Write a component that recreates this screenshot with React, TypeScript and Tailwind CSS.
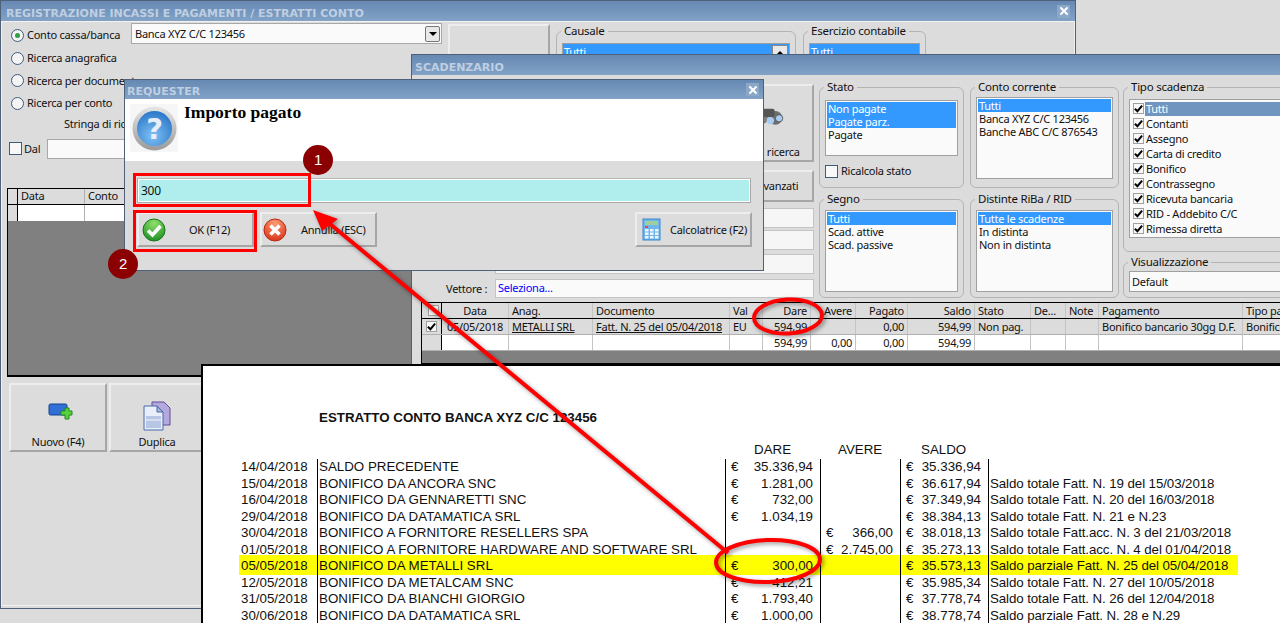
import { X } from "lucide-react";
import type { ReactNode } from "react";

const titleBar =
  "flex items-center justify-between bg-gradient-to-b from-[#6689b3] to-[#82a2c6] font-['DejaVu_Sans'] text-[11px] font-bold tracking-normal text-[#bfcfe2]";

function CloseBox({ className }: { className: string }) {
  return (
    <span className={`flex h-[13px] w-[13px] items-center justify-center bg-[#8ba8c9] ${className}`}>
      <X size={12} strokeWidth={4} className="text-white" />
    </span>
  );
}

function Radio({ label, checked }: { label: string; checked?: boolean }) {
  return (
    <div className="flex h-[22.7px] items-center gap-[3px] whitespace-nowrap">
      <span className="flex h-[13px] w-[13px] shrink-0 items-center justify-center rounded-full border border-[#3f5c7c] bg-[#f4f4f4]">
        {checked && <span className="h-[5px] w-[5px] rounded-full bg-[#2f9e44]" />}
      </span>
      {label}
    </div>
  );
}

function CheckBox({ checked, small }: { checked?: boolean; small?: boolean }) {
  return (
    <span
      className={`flex shrink-0 items-center justify-center border bg-[#f8f8f8] ${
        small ? "h-[11px] w-[11px] border-[#a0a0a0]" : "h-[13px] w-[13px] border-[#3f5c7c]"
      }`}
    >
      {checked && (
        <svg viewBox="0 0 10 10" className="h-[9px] w-[9px]">
          <path d="M1 5.2 L3.8 8 L9 1.8" fill="none" stroke="#000" strokeWidth="2.2" />
        </svg>
      )}
    </span>
  );
}

function Bevel({ className, children }: { className: string; children?: ReactNode }) {
  return (
    <div
      className={`shrink-0 border-2 border-t-[#ededed] border-l-[#ededed] border-r-[#a6a6a6] border-b-[#a6a6a6] bg-[#dcdcdc] ${className}`}
    >
      {children}
    </div>
  );
}

function Group({ label, className, children }: { label: string; className: string; children?: ReactNode }) {
  return (
    <fieldset className={`shrink-0 rounded-[6px] border border-[#b4b4b4] px-[5px] ${className}`}>
      <legend className="-ml-[1px] px-[3px] text-[11.5px] leading-[14px]">{label}</legend>
      {children}
    </fieldset>
  );
}

function ListBox({
  items,
  selected,
  className,
}: {
  items: string[];
  selected: number;
  className: string;
}) {
  return (
    <div className={`border border-[#a0a0a0] bg-[#fafafa] p-[1px] leading-[13px] ${className}`}>
      {items.map((item, i) => (
        <div key={item} className={`h-[13px] pl-[1px] ${i < selected ? "bg-[#3399ff] text-white" : ""}`}>
          {item}
        </div>
      ))}
    </div>
  );
}

function Binoculars({ className }: { className: string }) {
  return (
    <svg viewBox="0 0 34 24" className={className}>
      <circle cx="9" cy="14" r="7" fill="#7f7f7f" />
      <circle cx="24" cy="14" r="7.5" fill="#6d6d6d" />
      <rect x="10" y="4" width="13" height="9" rx="2" fill="#555" />
      <circle cx="18.5" cy="17" r="4" fill="#a9cdf2" />
      <circle cx="28" cy="14.5" r="4" fill="#a9cdf2" stroke="#555" />
    </svg>
  );
}

const tipoScadenza = [
  "Tutti",
  "Contanti",
  "Assegno",
  "Carta di credito",
  "Bonifico",
  "Contrassegno",
  "Ricevuta bancaria",
  "RID - Addebito C/C",
  "Rimessa diretta",
];

const gridCols =
  "grid grid-cols-[20px_67px_84px_137px_33px_48px_45px_52px_67px_56px_35px_33px_144px_60px]";

const headers: [string, string?][] = [
  [""],
  ["Data", "center"],
  ["Anag."],
  ["Documento"],
  ["Val"],
  ["Dare", "right"],
  ["Avere", "right"],
  ["Pagato", "right"],
  ["Saldo", "right"],
  ["Stato"],
  ["De..."],
  ["Note"],
  ["Pagamento"],
  ["Tipo pa"],
];

function cellAlign(align?: string) {
  if (align === "right") return "text-right pr-[3px]";
  if (align === "center") return "text-center";
  return "pl-[3px]";
}

const rowOne = [
  "05/05/2018",
  "METALLI SRL",
  "Fatt. N. 25 del 05/04/2018",
  "EU",
  "594,99",
  "",
  "0,00",
  "594,99",
  "Non pag.",
  "",
  "",
  "Bonifico bancario 30gg D.F.",
  "Bonifico",
];
const rowTwo = ["", "", "", "", "594,99", "0,00", "0,00", "594,99", "", "", "", "", ""];

const statement = [
  ["14/04/2018", "SALDO PRECEDENTE", "35.336,94", "", "35.336,94", ""],
  ["15/04/2018", "BONIFICO DA ANCORA SNC", "1.281,00", "", "36.617,94", "Saldo totale Fatt. N. 19 del 15/03/2018"],
  ["16/04/2018", "BONIFICO DA GENNARETTI SNC", "732,00", "", "37.349,94", "Saldo totale Fatt. N. 20 del 16/03/2018"],
  ["29/04/2018", "BONIFICO DA DATAMATICA SRL", "1.034,19", "", "38.384,13", "Saldo totale Fatt. N. 21 e N.23"],
  ["30/04/2018", "BONIFICO A FORNITORE RESELLERS SPA", "", "366,00", "38.018,13", "Saldo totale Fatt.acc. N. 3 del 21/03/2018"],
  ["01/05/2018", "BONIFICO A FORNITORE HARDWARE AND SOFTWARE SRL", "", "2.745,00", "35.273,13", "Saldo totale Fatt.acc. N. 4 del 01/04/2018"],
  ["05/05/2018", "BONIFICO DA METALLI SRL", "300,00", "", "35.573,13", "Saldo parziale Fatt. N. 25 del 05/04/2018"],
  ["12/05/2018", "BONIFICO DA METALCAM SNC", "412,21", "", "35.985,34", "Saldo totale Fatt. N. 27 del 10/05/2018"],
  ["31/05/2018", "BONIFICO DA BIANCHI GIORGIO", "1.793,40", "", "37.778,74", "Saldo totale Fatt. N. 26 del 12/04/2018"],
  ["30/06/2018", "BONIFICO DA DATAMATICA SRL", "1.000,00", "", "38.778,74", "Saldo parziale Fatt. N. 28 e N.29"],
];

function Money({ value, className }: { value: string; className: string }) {
  return (
    <div className={`flex justify-between border-l border-black pl-[5px] ${className}`}>
      <span>{value && "€"}</span>
      <span>{value}</span>
    </div>
  );
}

function MainWindow() {
  return (
    <div className="absolute left-0 top-0 h-[609px] w-[1076px] border border-[#4f6178]">
      <div className={`${titleBar} h-[20px] pl-[5px] pr-[5px] pt-[6px]`}>
        REGISTRAZIONE INCASSI E PAGAMENTI / ESTRATTI CONTO
        <CloseBox className="-mt-[6px]" />
      </div>
      <div className="flex h-[585px] border border-[#f2f2f2] bg-[#dcdcdc]">
        <div className="w-[446px] shrink-0 pl-[5px] pt-[1px]">
          <div className="flex">
            <div className="w-[124px] shrink-0 pl-[4px] pt-[1px]">
              <Radio label="Conto cassa/banca" checked />
              <Radio label="Ricerca anagrafica" />
              <Radio label="Ricerca per documento" />
              <Radio label="Ricerca per conto" />
            </div>
            <div className="flex h-[21px] w-[311px] shrink-0 items-center justify-between border border-[#a8a8a8] bg-[#fafafa] pl-[3px] pr-[1px]">
              Banca XYZ C/C 123456
              <span className="flex h-[16px] w-[15px] items-center justify-center rounded-[2px] border border-[#777] bg-[#e8e8e8]">
                <span className="border-x-[4px] border-t-[4px] border-x-transparent border-t-black" />
              </span>
            </div>
          </div>
          <div className="mt-[2px] pl-[57px]">Stringa di ricerca</div>
          <div className="mt-[8px] flex h-[20px] items-center gap-[2px] pl-[2px]">
            <CheckBox />
            Dal
            <span className="ml-[5px] h-[20px] w-[200px] border border-[#a8a8a8] bg-[#fafafa]" />
          </div>
          <div className="mt-[29px] h-[189px] w-[405px] border border-b-2 border-black bg-[#808080]">
            <div className="flex h-[16px] border-b border-black bg-[#dcdcdc]">
              <span className="w-[10px] border-r border-black" />
              <span className="w-[67px] border-r border-[#b0b0b0] pl-[3px]">Data</span>
              <span className="w-[60px] pl-[3px]">Conto</span>
            </div>
            <div className="flex h-[16px] bg-white">
              <span className="w-[10px] border-r border-black bg-[#dcdcdc]" />
              <span className="w-[67px] border-r border-[#b0b0b0]" />
            </div>
          </div>
          <div className="mt-[6px] flex gap-[2px] pl-[2px]">
            <Bevel className="flex h-[69px] w-[98px] flex-col items-center justify-end pb-[1px]">
              <svg viewBox="0 0 26 20" className="mb-[12px] ml-[6px] h-[20px] w-[26px]">
                <rect x="1" y="1" width="18" height="11" rx="1.5" fill="#2f6fd6" stroke="#12408f" />
                <path d="M14 5h4V2h4v3h3v4h-3v4h-4V9h-4z" transform="translate(-1 3)" fill="#58d23c" stroke="#1f8a18" />
              </svg>
              Nuovo (F4)
            </Bevel>
            <Bevel className="flex h-[69px] w-[96px] flex-col items-center justify-end pb-[1px]">
              <svg viewBox="0 0 28 30" className="mb-[4px] h-[30px] w-[28px]">
                <path d="M9 1h12l6 6v17H9z" fill="#b5a8dc" stroke="#5d4f96" />
                <path d="M1 5h13l6 6v18H1z" fill="#e8eefa" stroke="#4a6aa5" />
                <rect x="3" y="15" width="15" height="12" fill="#b6c6e4" />
                <path d="M3 19h15" stroke="#f4f6fb" strokeWidth="1" />
                <path d="M14 5v6h6z" fill="#9fb6de" stroke="#4a6aa5" />
              </svg>
              Duplica
            </Bevel>
          </div>
        </div>
        <Bevel className="mt-[2px] flex h-[90px] w-[102px] justify-center pt-[27px]">
          <Binoculars className="h-[22px] w-[34px]" />
        </Bevel>
        <div className="flex gap-[7px] pl-[6px] pt-[2px]">
          <Group label="Causale" className="h-[60px] w-[240px]">
            <div className="mt-[5px] flex h-[40px] border border-[#a0a0a0] bg-[#3399ff] pl-[1px] pr-[1px] pt-[1px] text-white">
              <span className="grow">Tutti</span>
              <span className="flex h-[16px] w-[16px] items-center justify-center border border-[#888] bg-[#e8e8e8]">
                <span className="border-x-[4px] border-b-[4px] border-x-transparent border-b-black" />
              </span>
            </div>
          </Group>
          <Group label="Esercizio contabile" className="h-[60px] w-[123px]">
            <div className="mt-[5px] h-[40px] border border-[#a0a0a0] bg-[#3399ff] pl-[1px] pt-[1px] text-white">Tutti</div>
          </Group>
        </div>
      </div>
    </div>
  );
}

function ScadenzarioWindow() {
  return (
    <div className="absolute left-[411px] top-[54px] h-[311px] w-[900px] border border-[#4f6178] bg-[#dcdcdc]">
      <div className={`${titleBar} h-[20px] pl-[3px] pt-[6px]`}>SCADENZARIO</div>
      <div className="flex h-[227px] pl-[2px] pt-[5px]">
        <div className="flex w-[405px] shrink-0 flex-col items-end pr-[5px] pt-[4px]">
          <Bevel className="flex h-[78px] w-[90px] flex-col items-center justify-end pb-[1px]">
            <Binoculars className="mb-[18px] h-[22px] w-[34px]" />
            Avvia ricerca
          </Bevel>
          <Bevel className="mt-[8px] flex h-[32px] w-[90px] items-center justify-center whitespace-nowrap pr-[6px]">
            Filtri avanzati
          </Bevel>
          <div className="mt-[6px] h-[20px] w-[319px] border border-[#c4c4c4] bg-[#f6f6f6]" />
          <div className="mt-[2px] h-[20px] w-[319px] border border-[#c4c4c4] bg-[#f6f6f6]" />
          <div className="mt-[4px] h-[20px] w-[319px] border border-[#c4c4c4] bg-[#f6f6f6]" />
          <div className="mt-[5px] flex w-[319px] items-center">
            <span className="-ml-[49px] w-[49px] shrink-0">Vettore :</span>
            <div className="h-[19px] grow border border-[#c4c4c4] bg-[#fafafa] pl-[2px] pt-[1px] text-[#0000ff]">
              Seleziona...
            </div>
          </div>
        </div>
        <div className="flex shrink-0 flex-col gap-[4px]">
          <Group label="Stato" className="h-[108px] w-[145px]">
            <ListBox items={["Non pagate", "Pagate parz.", "Pagate"]} selected={2} className="mt-[6px] h-[56px]" />
            <div className="mt-[8px] flex items-center gap-[3px]">
              <CheckBox />
              Ricalcola stato
            </div>
          </Group>
          <Group label="Segno" className="h-[106px] w-[145px]">
            <ListBox items={["Tutti", "Scad. attive", "Scad. passive"]} selected={1} className="mt-[4px] h-[82px]" />
          </Group>
        </div>
        <div className="ml-[6px] flex shrink-0 flex-col gap-[4px]">
          <Group label="Conto corrente" className="h-[108px] w-[149px]">
            <ListBox
              items={["Tutti", "Banca XYZ C/C 123456", "Banche ABC C/C 876543"]}
              selected={1}
              className="mt-[3px] h-[82px]"
            />
          </Group>
          <Group label="Distinte RiBa / RID" className="h-[106px] w-[149px]">
            <ListBox
              items={["Tutte le scadenze", "In distinta", "Non in distinta"]}
              selected={1}
              className="mt-[4px] h-[82px]"
            />
          </Group>
        </div>
        <div className="ml-[4px] flex shrink-0 flex-col gap-[3px]">
          <Group label="Tipo scadenza" className="h-[172px] w-[180px]">
            <div className="mt-[5px] h-[139px] border border-[#a0a0a0] bg-[#fafafa] pl-[3px] pt-[1px]">
              {tipoScadenza.map((item, i) => (
                <div key={item} className="flex h-[15px] items-center gap-[1px]">
                  <CheckBox checked small />
                  <span className={`grow pl-[1px] ${i === 0 ? "bg-[#7096c0] text-white" : ""}`}>{item}</span>
                </div>
              ))}
            </div>
          </Group>
          <Group label="Visualizzazione" className="h-[43px] w-[180px]">
            <div className="mt-[2px] flex h-[21px] items-center border border-[#a0a0a0] bg-[#fafafa] pl-[2px]">
              Default
            </div>
          </Group>
        </div>
      </div>
      <div className="ml-[9px] h-[62px] border-y border-l border-black bg-[#808080]">
        <div className={`${gridCols} h-[16px] border-b border-black bg-[#dcdcdc] leading-[15px]`}>
          {headers.map(([label, align], i) => (
            <div
              key={label + i}
              className={`overflow-hidden whitespace-nowrap border-r ${i === 0 ? "flex items-center justify-center border-black" : "border-[#c4c4c4]"} ${cellAlign(align)}`}
            >
              {i === 0 ? <CheckBox small /> : label}
            </div>
          ))}
        </div>
        <div className={`${gridCols} h-[16px] border-b border-[#b0b0b0] bg-[#dcdcdc] leading-[15px]`}>
          <div className="flex items-center justify-center border-r border-black">
            <CheckBox checked small />
          </div>
          {rowOne.map((cell, i) => (
            <div
              key={i}
              className={`overflow-hidden whitespace-nowrap border-r border-[#c4c4c4] ${cellAlign(headers[i + 1][1])} ${i === 1 || i === 2 ? "underline" : ""}`}
            >
              {cell}
            </div>
          ))}
        </div>
        <div className={`${gridCols} h-[16px] border-b border-[#b0b0b0] bg-white leading-[15px]`}>
          <div className="border-r border-black bg-[#dcdcdc]" />
          {rowTwo.map((cell, i) => (
            <div key={i} className={`border-r border-[#c4c4c4] ${cellAlign(headers[i + 1][1])}`}>
              {cell}
            </div>
          ))}
        </div>
      </div>
    </div>
  );
}

function RequesterDialog() {
  return (
    <div className="absolute left-[124px] top-[79px] h-[192px] w-[640px] border border-[#4f6178] bg-[#dcdcdc]">
      <div className={`${titleBar} h-[19px] pl-[2px] pr-[4px] pt-[4px]`}>
        REQUESTER
        <CloseBox className="-mt-[4px]" />
      </div>
      <div className="flex h-[62px] gap-[6px] bg-white pl-[5px] pt-[5px]">
        <svg viewBox="0 0 48 48" className="h-[48px] w-[48px] bg-[#f6f6f6]">
          <defs>
            <radialGradient id="qBlue" cx="0.45" cy="0.7" r="0.7">
              <stop offset="0" stopColor="#7fc2f5" />
              <stop offset="1" stopColor="#2c77c9" />
            </radialGradient>
            <linearGradient id="qRing" x1="0" y1="0" x2="0" y2="1">
              <stop offset="0" stopColor="#e6e6e6" />
              <stop offset="1" stopColor="#9a9a9a" />
            </linearGradient>
          </defs>
          <circle cx="24.5" cy="24.5" r="22" fill="url(#qRing)" />
          <circle cx="24.5" cy="24.5" r="17.5" fill="url(#qBlue)" />
          <text x="24.5" y="35" textAnchor="middle" fontSize="29" fontWeight="700" fontFamily="DejaVu Sans" fill="#e8eef8">
            ?
          </text>
        </svg>
        <div className="font-['Liberation_Serif'] text-[17.5px] font-bold leading-[17px] tracking-normal text-black">
          Importo pagato
        </div>
      </div>
      <div className="ml-[12px] mt-[17px] flex h-[25px] w-[614px] items-center border-2 border-[#a8a8a8] border-t-[#b8b8b8] bg-[#b0eeee] pl-[2px] text-[12px] outline outline-1 -outline-offset-2 outline-white">
        300
      </div>
      <div className="ml-[12px] mt-[9px] flex w-[615px] gap-[6px]">
        <Bevel className="flex h-[35px] w-[117px] items-center pl-[3px]">
          <svg viewBox="0 0 24 24" className="h-[24px] w-[24px]">
            <defs>
              <radialGradient id="okGreen" cx="0.5" cy="0.2" r="0.9">
                <stop offset="0" stopColor="#8fe06a" />
                <stop offset="1" stopColor="#14881e" />
              </radialGradient>
            </defs>
            <circle cx="12" cy="12" r="11" fill="url(#okGreen)" stroke="#17751c" />
            <path d="M6 12.5 L10.5 17 L18.5 8" fill="none" stroke="#fff" strokeWidth="3.6" />
          </svg>
          <span className="ml-[23px]">OK (F12)</span>
        </Bevel>
        <Bevel className="flex h-[35px] w-[117px] items-center pl-[1px]">
          <svg viewBox="0 0 24 24" className="h-[24px] w-[24px]">
            <defs>
              <radialGradient id="noRed" cx="0.5" cy="0.2" r="0.9">
                <stop offset="0" stopColor="#ff9a70" />
                <stop offset="1" stopColor="#d42c14" />
              </radialGradient>
            </defs>
            <circle cx="12" cy="12" r="11" fill="url(#noRed)" stroke="#b82a14" />
            <path d="M7.5 7.5 L16.5 16.5 M16.5 7.5 L7.5 16.5" fill="none" stroke="#fff" strokeWidth="3.6" />
          </svg>
          <span className="ml-[14px]">Annulla (ESC)</span>
        </Bevel>
        <Bevel className="ml-auto flex h-[35px] w-[117px] items-center pl-[5px]">
          <svg viewBox="0 0 20 24" className="h-[24px] w-[20px]">
            <rect x="1" y="1" width="17" height="21" fill="#6fb6ee" stroke="#3b87cc" />
            <rect x="3" y="3" width="13" height="4" fill="#9fcf9f" />
            <rect x="3" y="8" width="3" height="2" fill="#d9534f" />
            {[11, 14.5, 18].map((y) =>
              [3, 8, 13].map((x) => <rect key={`${x}-${y}`} x={x} y={y} width="3.5" height="2.5" fill="#eef6fc" />)
            )}
          </svg>
          <span className="ml-[8px] whitespace-nowrap">Calcolatrice (F2)</span>
        </Bevel>
      </div>
    </div>
  );
}

function StatementPanel() {
  return (
    <div className="absolute left-[201px] top-[364px] h-[270px] w-[1090px] border-l-2 border-t-2 border-black bg-white font-['Liberation_Sans'] text-[13.33px] leading-[16.5px] tracking-normal text-[#111]">
      <div className="ml-[116px] mt-[44px] h-[32px] whitespace-nowrap font-bold">
        ESTRATTO CONTO BANCA XYZ C/C 123456
      </div>
      <div className="flex h-[17px] pl-[36px]">
        <span className="ml-[515px] w-[84px]">DARE</span>
        <span className="w-[83px]">AVERE</span>
        <span>SALDO</span>
      </div>
      {statement.map((row) => {
        const highlight = row[0] === "05/05/2018";
        const inset = highlight ? "-mt-[2.75px] pt-[2.75px]" : "";
        return (
          <div
            key={row[0]}
            className={`ml-[36px] flex w-[999px] ${highlight ? "relative -mb-[0.75px] -mt-[2.75px] h-[20px] bg-[#ffff00] pt-[2.75px]" : "h-[16.5px]"}`}
          >
            <div className="w-[78px] whitespace-nowrap pl-[2px]">{row[0]}</div>
            <div className={`w-[408px] whitespace-nowrap border-l border-black pl-[1px] ${inset}`}>{row[1]}</div>
            <Money value={row[2]} className={`w-[95px] pr-[7px] ${inset}`} />
            <Money value={row[3]} className={`w-[80px] pr-[7px] ${inset}`} />
            <Money value={row[4]} className={`w-[88px] pr-[7px] ${inset}`} />
            <div className={`grow whitespace-nowrap border-l border-black pl-[1px] tracking-[-0.1px] ${inset}`}>{row[5]}</div>
          </div>
        );
      })}
    </div>
  );
}

function Annotations() {
  return (
    <>
      <div className="absolute left-[133px] top-[173px] h-[34px] w-[178px] border-[3px] border-[#ff0000]" />
      <div className="absolute left-[133px] top-[210px] h-[42px] w-[124px] border-[3px] border-[#ff0000]" />
      <span className="absolute left-[303px] top-[145px] flex h-[30px] w-[30px] items-center justify-center rounded-full bg-[#8b0000] font-['Liberation_Sans'] text-[15px] text-white">
        1
      </span>
      <span className="absolute left-[108px] top-[249px] flex h-[30px] w-[30px] items-center justify-center rounded-full bg-[#8b0000] font-['Liberation_Sans'] text-[15px] text-white">
        2
      </span>
      <svg
        viewBox="0 0 1280 623"
        className="pointer-events-none absolute left-0 top-0 h-[623px] w-[1280px] drop-shadow-[2px_2px_2px_rgba(0,0,0,0.4)]"
      >
        <path d="M728 553 L324 219" stroke="#ff0000" strokeWidth="4" fill="none" />
        <path d="M313 210 L338 219 L322 231 Z" fill="#ff0000" />
        <ellipse cx="788" cy="316.5" rx="34" ry="17" fill="none" stroke="#ff0000" strokeWidth="4" transform="rotate(-3 788 316.5)" />
        <ellipse cx="768" cy="561" rx="52" ry="21" fill="none" stroke="#ff0000" strokeWidth="4" transform="rotate(-2 768 561)" />
      </svg>
    </>
  );
}

export default function App() {
  return (
    <div className="relative h-[623px] w-[1280px] overflow-hidden bg-[#dcdcdc] font-['Noto_Sans'] text-[11px] leading-[14px] tracking-[-0.25px] text-[#111]">
      <MainWindow />
      <ScadenzarioWindow />
      <StatementPanel />
      <RequesterDialog />
      <Annotations />
    </div>
  );
}
